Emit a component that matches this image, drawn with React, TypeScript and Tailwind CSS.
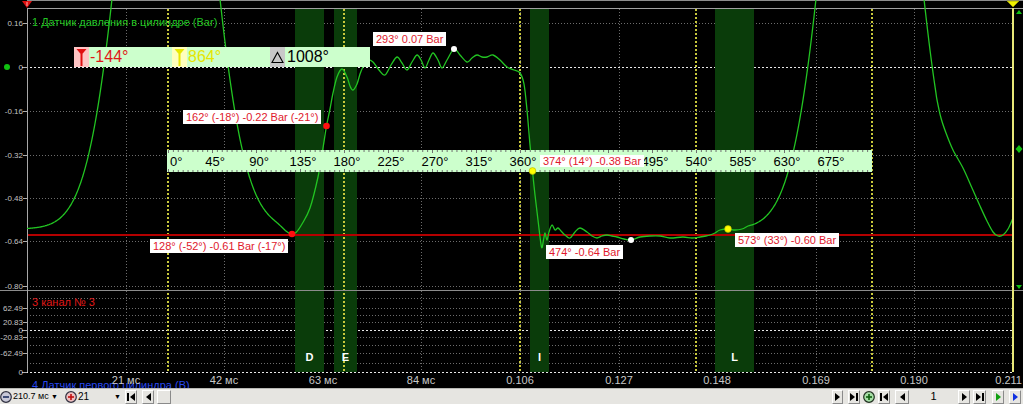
import React from "react";

type P = [number, number];

const gaussY = (x: number, c: number, w: number) =>
  229 - 671 * Math.exp(-(((x - c) / w) ** 2));

function buildTrace(): P[] {
  const pts: P[] = [];
  for (let x = 27; x <= 286; x += 1) {
    pts.push([x, gaussY(x, 166, 52.2) + 7 * Math.exp(-(((x - 291) / 10) ** 2))]);
  }
  const mid: P[] = [
    [291, 234], [296, 232.5], [302, 224], [310, 208], [318, 177], [323, 148], [326.5, 126],
    [330, 109], [333, 93], [337, 77], [342, 69], [347, 77], [350, 86], [353, 90], [357, 84],
    [360, 74], [363, 67], [368, 60], [373, 62], [379, 70], [385, 75], [391, 65], [397, 57],
    [402, 63], [407, 70], [412, 62], [417, 55], [421, 60], [425, 68], [429, 60], [433, 53],
    [438, 60], [442, 68], [447, 60], [454, 49], [460, 55], [467, 62], [472, 58], [477, 55],
    [482, 57], [487, 57], [493, 55], [500, 60], [507, 67], [514, 70], [520, 73], [524, 84],
    [527, 110], [530, 145], [532.5, 171], [535, 195], [538, 220], [541.5, 247], [543.5, 240],
    [545, 233], [547, 240], [549, 232], [552, 225], [555, 230], [558, 228], [561, 231],
    [565, 235], [570, 238], [575, 232], [580, 228], [587, 232], [592, 236], [597, 238],
    [602, 236], [607, 235], [612, 236], [617, 237], [624, 239], [631, 240], [640, 237],
    [650, 236], [660, 236], [670, 238], [683, 237], [692, 238], [700, 237], [706, 236],
    [710, 235], [715, 233], [720, 230], [728, 229], [735, 230], [742, 229], [748, 226],
  ];
  pts.push(...mid);
  for (let x = 752; x <= 937; x += 1) pts.push([x, gaussY(x, 870, 52.2)]);
  pts.push(
    [941, 118], [946, 133], [953, 150], [963, 168], [972, 188], [980, 206], [987, 221],
    [993, 232], [998, 236], [1003, 235], [1008, 229], [1013, 218]
  );
  return pts;
}

function toPath(pts: P[]): string {
  let d = `M${pts[0][0]},${pts[0][1].toFixed(2)}`;
  for (let i = 0; i < pts.length - 1; i++) {
    const p0 = pts[i - 1] || pts[i];
    const p1 = pts[i];
    const p2 = pts[i + 1];
    const p3 = pts[i + 2] || p2;
    const c1x = p1[0] + (p2[0] - p0[0]) / 6;
    const c1y = p1[1] + (p2[1] - p0[1]) / 6;
    const c2x = p2[0] - (p3[0] - p1[0]) / 6;
    const c2y = p2[1] - (p3[1] - p1[1]) / 6;
    d += `C${c1x.toFixed(2)},${c1y.toFixed(2)} ${c2x.toFixed(2)},${c2y.toFixed(2)} ${p2[0]},${p2[1].toFixed(2)}`;
  }
  return d;
}

const TRACE = toPath(buildTrace());

const yLabels: [string, number][] = [
  ["0.16", 23], ["0", 67], ["-0.16", 111], ["-0.32", 155], ["-0.48", 198], ["-0.64", 241], ["-0.80", 286],
  ["62.49", 308], ["20.83", 322], ["0", 330], ["-20.83", 337], ["-62.49", 353], ["0", 372],
];

const timeLabels = ["21 мс", "42 мс", "63 мс", "84 мс", "0.106", "0.127", "0.148", "0.169", "0.190", "0.211"];
const gridX = [1, 2, 3, 4, 5, 6, 7, 8, 9].map((k) => Math.round(27 + 98.6 * k) + 0.5);
const yellowX = [168, 344, 520, 696, 872];
const bands: [number, number, string][] = [
  [295, 324, "D"], [334, 357, "E"], [530, 549, "I"], [715, 754, "L"],
];

const annotations: { x: number; y: number; t: string; h: number }[] = [
  { x: 373, y: 32, t: "293° 0.07 Bar", h: 14 },
  { x: 183, y: 110, t: "162° (-18°) -0.22 Bar (-21°)", h: 14 },
  { x: 150, y: 239, t: "128° (-52°) -0.61 Bar (-17°)", h: 14 },
  { x: 546, y: 245, t: "474° -0.64 Bar", h: 14 },
  { x: 735, y: 233, t: "573° (33°) -0.60 Bar", h: 14 },
];

function CursorIcon({ color }: { color: string }) {
  return (
    <svg width="15" height="20" viewBox="0 0 15 20">
      <polygon points="2.5,2 12.5,2 7.5,8" fill={color} />
      <rect x="6.5" y="7" width="2" height="12" fill={color} />
    </svg>
  );
}

function Ruler() {
  const ticks: React.ReactNode[] = [];
  for (let a = 0; a <= 720; a += 5) {
    const x = 1 + a * (352 / 360) + 0.5;
    const big = a % 45 === 0;
    ticks.push(<line key={`t${a}`} x1={x} x2={x} y1={0} y2={big ? 3 : 2} stroke="#707070" />);
    ticks.push(<line key={`b${a}`} x1={x} x2={x} y1={22} y2={big ? 19 : 20} stroke="#707070" />);
  }
  const labels = [45, 90, 135, 180, 225, 270, 315, 360, 495, 540, 585, 630, 675];
  return (
    <div className="absolute left-[167px] top-[150px] w-[705px] h-[22px] bg-[#ccffcc]">
      <svg width="705" height="22" className="absolute left-0 top-0">
        {ticks}
      </svg>
      <span className="absolute left-[3px] top-[11px] -translate-y-1/2 text-[13px] leading-none text-black whitespace-nowrap">
        0°
      </span>
      {labels.map((a) => (
        <span
          key={a}
          className="absolute top-[11px] -translate-x-1/2 -translate-y-1/2 text-[13px] leading-none text-black whitespace-nowrap"
          style={{ left: 1 + a * (352 / 360) + 3 }}
        >
          {a}°
        </span>
      ))}
    </div>
  );
}

function Btn({ children, w = 12 }: { children?: React.ReactNode; w?: number }) {
  return (
    <div
      className="h-[14px] flex items-center justify-center border border-t-white border-l-white border-r-[#8a8a8a] border-b-[#8a8a8a] bg-[#e6e5e1]"
      style={{ width: w }}
    >
      {children}
    </div>
  );
}

const Play = ({ c = "#000" }: { c?: string }) => (
  <svg width="7" height="8" viewBox="0 0 7 8"><polygon points="1,0 6,4 1,8" fill={c} /></svg>
);
const PlayEnd = () => (
  <svg width="8" height="8" viewBox="0 0 8 8"><polygon points="0,0 5,4 0,8" fill="#000" /><rect x="6" y="0" width="2" height="8" fill="#000" /></svg>
);
const Back = () => (
  <svg width="7" height="8" viewBox="0 0 7 8"><polygon points="6,0 1,4 6,8" fill="#000" /></svg>
);
const BackStart = () => (
  <svg width="8" height="8" viewBox="0 0 8 8"><rect x="0" y="0" width="2" height="8" fill="#000" /><polygon points="8,0 3,4 8,8" fill="#000" /></svg>
);
const CircleBtn = ({ fill, sign, signColor }: { fill: string; sign: "+" | "-"; signColor: string }) => (
  <svg width="12" height="12" viewBox="0 0 12 12">
    <circle cx="6" cy="6" r="5.3" fill={fill} stroke="#303040" strokeWidth="1.2" />
    <rect x="3" y="5.2" width="6" height="1.6" fill={signColor} />
    {sign === "+" && <rect x="5.2" y="3" width="1.6" height="6" fill={signColor} />}
  </svg>
);

function Toolbar() {
  return (
    <div className="h-[16px] flex items-center justify-between bg-[#e6e5e1] border-t border-[#b8b8b4] leading-none text-black">
      <div className="flex items-center">
        <CircleBtn fill="#c8c8d8" sign="-" signColor="#203060" />
        <div className="ml-[1px] w-[48px] flex items-center justify-between pr-[3px] whitespace-nowrap">
          <span className="text-[9px]">210.7 мс</span>
          <span className="text-[7px]">▼</span>
        </div>
        <div className="ml-[4px]"><CircleBtn fill="#f0c0c0" sign="+" signColor="#c01010" /></div>
        <div className="ml-[1px] w-[46px] flex items-center justify-between pr-[3px] whitespace-nowrap">
          <span className="text-[10px]">21</span>
          <span className="text-[7px]">▼</span>
        </div>
        <div className="ml-[1px]"><Btn><BackStart /></Btn></div>
        <div className="ml-[5px]"><Btn><Back /></Btn></div>
        <div className="ml-[3px]"><Btn w={14} /></div>
      </div>
      <div className="flex items-center mr-[2px]">
        <Btn w={11}><Play /></Btn>
        <div className="ml-[5px]"><Btn><PlayEnd /></Btn></div>
        <div className="ml-[3px]">
          <svg width="12" height="12" viewBox="0 0 12 12">
            <circle cx="6" cy="6" r="5.3" fill="#a8e0a8" stroke="#203020" strokeWidth="1.2" />
            <rect x="3" y="5.2" width="6" height="1.6" fill="#106010" />
            <rect x="5.2" y="3" width="1.6" height="6" fill="#106010" />
          </svg>
        </div>
        <div className="ml-[3px]"><Btn><BackStart /></Btn></div>
        <div className="ml-[5px]"><Btn w={14}><Back /></Btn></div>
        <div className="ml-[3px] w-[43px] h-[14px] flex items-center justify-center bg-[#e6e5e1] text-[11px]">1</div>
        <div className="ml-[3px]"><Btn><Play /></Btn></div>
        <div className="ml-[3px]"><Btn w={13}><PlayEnd /></Btn></div>
        <div className="ml-[6px]"><Btn><Play c="#10a010" /></Btn></div>
        <div className="ml-[5px]"><Btn><Play c="#1030e0" /></Btn></div>
      </div>
    </div>
  );
}

export default function App() {
  return (
    <div className="w-[1023px] h-[404px] bg-black flex flex-col overflow-hidden font-['Liberation_Sans',Arial,sans-serif]">
      <div className="relative h-[388px] overflow-hidden">
        <svg width="1023" height="388" className="absolute left-0 top-0">
          <line x1={27} x2={1023} y1={0.5} y2={0.5} stroke="#8c8c8c" />
          <line x1={27} x2={1023} y1={8.5} y2={8.5} stroke="#a0a0a0" />
          {[23, 111, 155, 198, 241, 286, 298, 308, 315, 322, 337, 345, 353, 363].map((y) => (
            <line key={`h${y}`} x1={27} x2={1013} y1={y + 0.5} y2={y + 0.5} stroke="#6c6c6c" strokeDasharray="1 2" />
          ))}
          {gridX.map((x) => (
            <line key={`v${x}`} x1={x} x2={x} y1={9} y2={372} stroke="#6c6c6c" strokeDasharray="1 2" />
          ))}
          {[67, 330, 372].map((y) => (
            <line key={`z${y}`} x1={22} x2={1013} y1={y + 0.5} y2={y + 0.5} stroke="#e8e8e8" strokeDasharray="2 2" />
          ))}
          {bands.map(([a, b]) => (
            <rect key={`b${a}`} x={a} y={9} width={b - a} height={363} fill="#0a3c0a" />
          ))}
          {yellowX.map((x) => (
            <line key={`y${x}`} x1={x} x2={x} y1={9} y2={372} stroke="#c8c83c" strokeWidth={2} strokeDasharray="2 2" />
          ))}
          <line x1={0} x2={1023} y1={290.5} y2={290.5} stroke="#8c8c8c" />
          <line x1={27.5} x2={27.5} y1={8} y2={372} stroke="#a8a8a8" />
          {yLabels.map(([, y], i) => (
            <line key={`tk${i}`} x1={23} x2={27} y1={y + 0.5} y2={y + 0.5} stroke="#b0b0b0" />
          ))}
          <line x1={28} x2={1013} y1={235} y2={235} stroke="#b40000" strokeWidth={2} />
          <path d={TRACE} fill="none" stroke="#22c422" strokeWidth={1.3} />
          <line x1={1013} x2={1013} y1={8} y2={372} stroke="#e8e878" strokeWidth={2} />
          <polygon points="1007,1 1019,1 1013,7" fill="#f0f000" stroke="#a0a000" strokeWidth={0.8} />
          <polygon points="22,1 32,1 27,8" fill="#e01010" />
          <line x1={27} x2={27} y1={2} y2={6} stroke="#ffb0b0" />
          <circle cx={7} cy={67} r={3} fill="#10c010" />
          <polygon points="1016,14 1022,14 1019,10" fill="#10c010" />
          <polygon points="1019,145 1022.5,149 1019,153 1015.5,149" fill="#10c010" />
          <polygon points="1016,285 1022,285 1019,289" fill="#10c010" />
        </svg>

        {yLabels.map(([t, y], i) => (
          <div
            key={`yl${i}`}
            className="absolute left-0 w-[23px] text-right text-[8px] leading-none text-[#c4c4c4] -translate-y-1/2"
            style={{ top: y + 0.5 }}
          >
            {t}
          </div>
        ))}

        <div className="absolute left-[32px] top-[16px] text-[11px] leading-[13px] text-[#22c422] whitespace-nowrap">
          1 Датчик давления в цилиндре (Bar)
        </div>
        <div className="absolute left-[32px] top-[296px] text-[11px] leading-[13px] text-[#e01818] whitespace-nowrap">
          3 канал № 3
        </div>
        <div className="absolute left-[32px] top-[379px] text-[11px] leading-[13px] text-[#2848f0] whitespace-nowrap">
          4 Датчик первого цилиндра (В)
        </div>

        {bands.map(([a, b, l]) => (
          <div
            key={`bl${l}`}
            className="absolute top-[357px] -translate-x-1/2 -translate-y-1/2 text-[11px] leading-none font-bold text-white"
            style={{ left: (a + b) / 2 }}
          >
            {l}
          </div>
        ))}

        {timeLabels.slice(0, 9).map((t, i) => (
          <div
            key={t}
            className="absolute top-[380px] -translate-x-1/2 -translate-y-1/2 text-[11px] leading-none text-[#c8c8c8] whitespace-nowrap"
            style={{ left: Math.round(27 + 98.6 * (i + 1)) }}
          >
            {t}
          </div>
        ))}
        <div className="absolute right-[1px] top-[380px] -translate-y-1/2 text-[11px] leading-none text-[#c8c8c8] whitespace-nowrap">
          {timeLabels[9]}
        </div>

        <div className="absolute left-[74px] top-[47px] w-[296px] h-[20px] bg-[#ccffcc] flex items-center">
          <div className="w-[98px] h-full flex items-center">
            <div className="w-[15px] h-full bg-[#ffc4c4]"><CursorIcon color="#e01010" /></div>
            <span className="ml-[1px] text-[16px] leading-none text-[#e01818]">-144°</span>
          </div>
          <div className="w-[98px] h-full flex items-center">
            <div className="w-[15px] h-full bg-[#ffffbc]"><CursorIcon color="#e8e800" /></div>
            <span className="ml-[1px] text-[16px] leading-none text-[#e6e600]">864°</span>
          </div>
          <div className="h-full flex items-center">
            <div className="w-[15px] h-full bg-[#c8c8c8] flex items-center justify-center">
              <svg width="13" height="13" viewBox="0 0 13 13">
                <polygon points="6.5,1.5 12,11.5 1,11.5" fill="none" stroke="#000" strokeWidth="1.1" />
              </svg>
            </div>
            <span className="ml-[2px] text-[16px] leading-none text-black">1008°</span>
          </div>
        </div>

        <Ruler />

        {annotations.map((a) => (
          <div
            key={a.t}
            className="absolute bg-white px-[3px] text-[11px] text-[#e0182c] whitespace-nowrap flex items-center"
            style={{ left: a.x, top: a.y, height: a.h }}
          >
            {a.t}
          </div>
        ))}
        <div className="absolute left-[540px] top-[155px] h-[12px] bg-white px-[3px] text-[11px] text-[#e0182c] whitespace-nowrap flex items-center">
          374° (14°) -0.38 Bar
        </div>

        <svg width="1023" height="388" className="absolute left-0 top-0 pointer-events-none">
          <circle cx={292} cy={234} r={3.3} fill="#ff1010" />
          <circle cx={326.5} cy={126} r={3.3} fill="#ff1010" />
          <circle cx={454} cy={49} r={3} fill="#ffffff" />
          <circle cx={631} cy={240} r={3} fill="#ffffff" />
          <circle cx={532.5} cy={171} r={3.4} fill="#ffff00" stroke="#b0b000" strokeWidth={0.6} />
          <circle cx={728} cy={229} r={3.4} fill="#ffff00" stroke="#b0b000" strokeWidth={0.6} />
        </svg>
      </div>
      <Toolbar />
    </div>
  );
}
